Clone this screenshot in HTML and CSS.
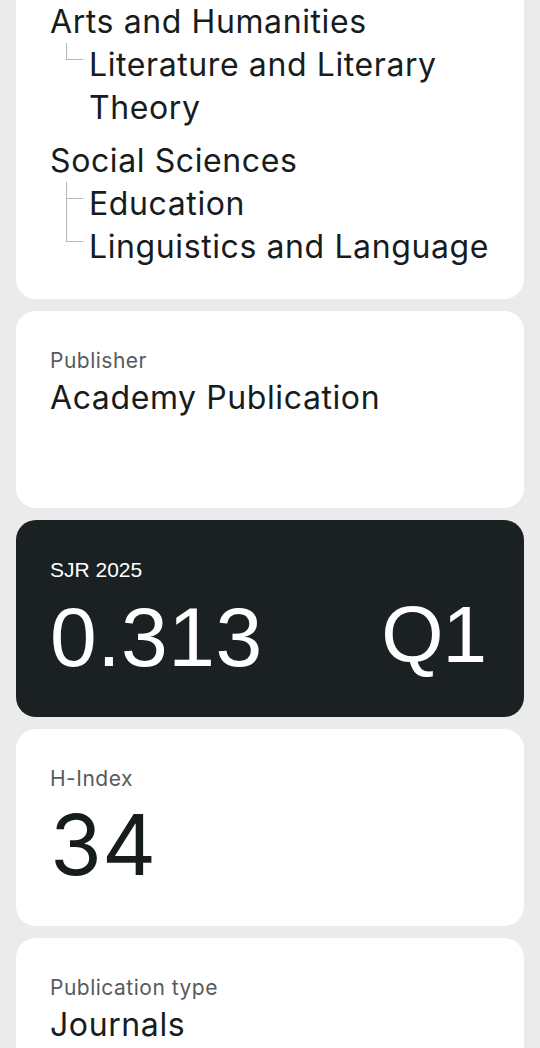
FILE: index.html
```html
<!DOCTYPE html>
<html lang="en">
<head>
    <meta charset="UTF-8">
    <meta name="viewport" content="width=device-width, initial-scale=1.0">
    <title>Journal Details</title>
    <link rel="stylesheet" href="styles.css">
</head>
<body>
    <main class="stack">
        <!-- Subject areas (card continues above the fold) -->
        <section class="card card-cut">
            <ul class="areas">
                <li class="area">
                    Arts and Humanities
                    <ul class="subareas">
                        <li>Literature and Literary Theory</li>
                    </ul>
                </li>
                <li class="area">
                    Social Sciences
                    <ul class="subareas">
                        <li>Education</li>
                        <li>Linguistics and Language</li>
                    </ul>
                </li>
            </ul>
        </section>

        <section class="card">
            <div class="label">Publisher</div>
            <div class="value">Academy Publication</div>
        </section>

        <section class="card card-dark">
            <div class="label">SJR 2025</div>
            <div class="sjr-row">
                <span class="big">0.313</span>
                <span class="big">Q1</span>
            </div>
        </section>

        <section class="card">
            <div class="label">H-Index</div>
            <div class="big-value">34</div>
        </section>

        <section class="card">
            <div class="label">Publication type</div>
            <div class="value">Journals</div>
        </section>
    </main>
</body>
</html>
```

FILE: styles.css
```css
body {
    font-family: Inter, "Noto Sans", sans-serif;
    margin: 0;
    padding: 0;
    background-color: #ebebeb;
    color: #171c1d;
}

.stack {
    display: flex;
    flex-direction: column;
    gap: 12px;
    padding: 0 16px;
}

.card {
    box-sizing: border-box;
    min-height: 197px;
    padding: 38px 20px 30px 34px;
    background-color: #fff;
    border-radius: 20px;
}

.card-cut {
    min-height: 0;
    padding-top: 0;
    padding-bottom: 31px;
    border-top-left-radius: 0;
    border-top-right-radius: 0;
}

.areas,
.subareas {
    list-style: none;
    margin: 0;
    padding: 0;
}

.area {
    font-size: 32px;
    line-height: 43px;
    letter-spacing: 0.6px;
}

.area + .area {
    margin-top: 10px;
}

.subareas li {
    position: relative;
    padding-left: 39px;
}

/* tree connectors */
.subareas li::before {
    content: "";
    position: absolute;
    left: 16px;
    top: 0;
    bottom: 0;
    border-left: 1px solid #b4b6b7;
}

.subareas li:last-child::before {
    bottom: auto;
    height: 16px;
}

.subareas li::after {
    content: "";
    position: absolute;
    left: 16px;
    top: 16px;
    width: 17px;
    border-top: 1px solid #b4b6b7;
}

.label {
    font-size: 21px;
    line-height: 24px;
    letter-spacing: 0.5px;
    color: #575b5c;
}

.value {
    margin-top: 3px;
    font-size: 32px;
    line-height: 43px;
    letter-spacing: 0.6px;
}

.card-dark {
    background-color: #1b2122;
    color: #fff;
    font-family: "Liberation Sans", Arial, sans-serif;
    padding-right: 36px;
}

.card-dark .label {
    color: #fff;
    font-size: 21px;
    letter-spacing: 0;
}

.sjr-row {
    display: flex;
    justify-content: space-between;
    margin-top: 13px;
}

.big {
    font-size: 84px;
    line-height: 1;
    letter-spacing: 0.5px;
}

.big + .big {
    font-size: 80px;
    letter-spacing: -1px;
    margin-right: 2px;
}

.big-value {
    margin-top: 12px;
    font-size: 84px;
    line-height: 1;
}
```
